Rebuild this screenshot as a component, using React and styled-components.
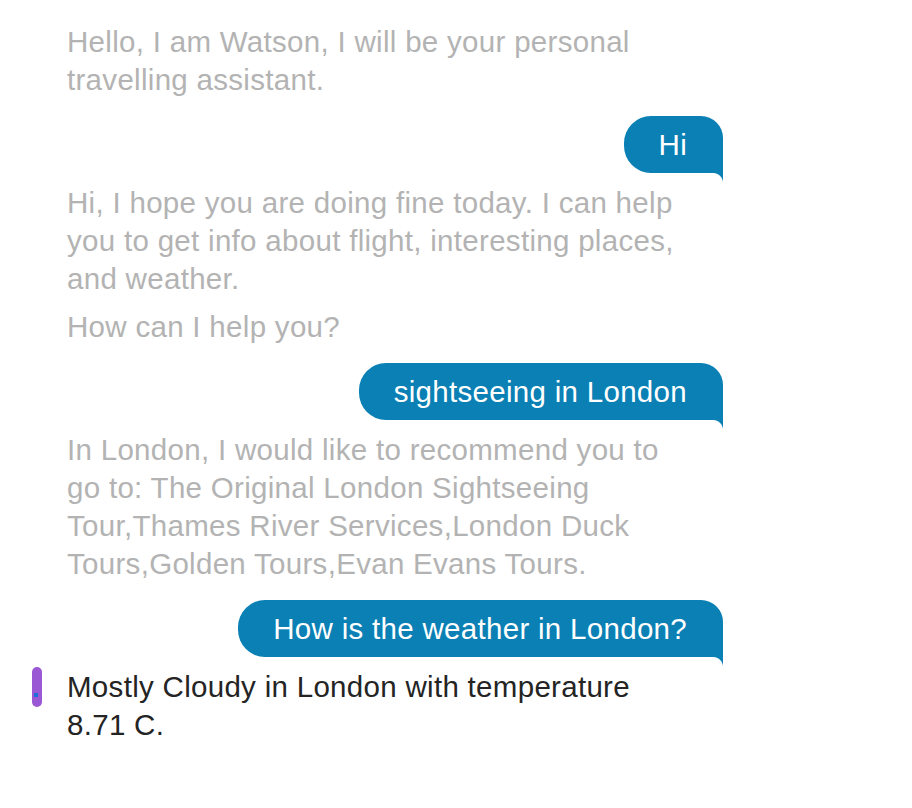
import React from "react";
import styled, { createGlobalStyle } from "styled-components";

const GlobalStyle = createGlobalStyle`
  html, body {
    margin: 0;
    padding: 0;
    background: #ffffff;
  }
  body {
    font-family: "Liberation Sans", Arial, Helvetica, sans-serif;
  }
`;

const Chat = styled.div`
  width: 691px;
  padding: 23px 0 40px 32px;
  display: flex;
  flex-direction: column;
  font-size: 29.5px;
  line-height: 38px;
  letter-spacing: 0.3px;
`;

const WatsonRow = styled.div`
  display: flex;
  align-items: flex-start;
`;

const Gutter = styled.div`
  width: 35px;
  flex: 0 0 35px;
  display: flex;
  align-items: flex-start;
`;

const LatestBar = styled.div`
  position: relative;
  width: 10px;
  height: 40px;
  margin-top: -1px;
  border-radius: 5px;
  background: #9b58d5;
`;

const Caret = styled.span`
  position: absolute;
  left: 2px;
  top: 26px;
  width: 4px;
  height: 4px;
  background: #1b6fd8;
`;

const WatsonText = styled.div`
  max-width: 615px;
  display: flex;
  flex-direction: column;
  gap: 10px;
  color: ${(p) => (p.$latest ? "#242424" : "#b3b3b3")};
`;

const Para = styled.p`
  margin: 0;
`;

const UserRow = styled.div`
  display: flex;
  justify-content: flex-end;
  margin: 17px 0 11px;
`;

const Bubble = styled.div`
  position: relative;
  background: #0a80b5;
  color: #ffffff;
  padding: 9.5px 36px 9.5px 35px;
  border-radius: 27px 22px 0 27px;

  &::after {
    content: "";
    position: absolute;
    right: 0;
    top: 100%;
    width: 10px;
    height: 10px;
    background: radial-gradient(
      circle at 0 100%,
      transparent 9.5px,
      #0a80b5 10.5px
    );
  }
`;

const messages = [
  { from: "watson", paras: ["Hello, I am Watson, I will be your personal travelling assistant."] },
  { from: "user", text: "Hi" },
  {
    from: "watson",
    paras: [
      "Hi, I hope you are doing fine today. I can help you to get info about flight, interesting places, and weather.",
      "How can I help you?",
    ],
  },
  { from: "user", text: "sightseeing in London" },
  {
    from: "watson",
    paras: [
      "In London, I would like to recommend you to go to: The Original London Sightseeing Tour,Thames River Services,London Duck Tours,Golden Tours,Evan Evans Tours.",
    ],
  },
  { from: "user", text: "How is the weather in London?" },
  { from: "watson", latest: true, paras: ["Mostly Cloudy in London with temperature 8.71 C."] },
];

export default function App() {
  return (
    <>
      <GlobalStyle />
      <Chat>
        {messages.map((m, i) =>
          m.from === "user" ? (
            <UserRow key={i}>
              <Bubble>{m.text}</Bubble>
            </UserRow>
          ) : (
            <WatsonRow key={i}>
              <Gutter>
                {m.latest && (
                  <LatestBar>
                    <Caret />
                  </LatestBar>
                )}
              </Gutter>
              <WatsonText $latest={m.latest}>
                {m.paras.map((p, j) => (
                  <Para key={j}>{p}</Para>
                ))}
              </WatsonText>
            </WatsonRow>
          )
        )}
      </Chat>
    </>
  );
}
